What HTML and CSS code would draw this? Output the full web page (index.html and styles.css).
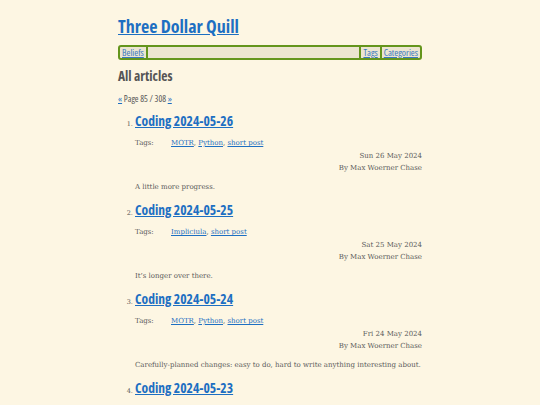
FILE: index.html
```html
<!DOCTYPE html>
<html lang="en">
<head>
<meta charset="utf-8">
<title>All articles - Three Dollar Quill</title>
<link rel="stylesheet" href="styles.css">
</head>
<body>
<div class="page">
  <h1 class="site-title"><a href="#">Three Dollar Quill</a></h1>
  <nav class="nav">
    <a class="nav-link first" href="#">Beliefs</a>
    <span class="nav-fill"></span>
    <a class="nav-link sep" href="#">Tags</a>
    <a class="nav-link sep" href="#">Categories</a>
  </nav>
  <h2 class="section-title">All articles</h2>
  <p class="pager"><a href="#">«</a> Page 85 / 308 <a href="#">»</a></p>
  <ol class="articles">
    <li class="article">
      <h3 class="article-title"><a href="#">Coding 2024-05-26</a></h3>
      <div class="tags"><span class="tags-label">Tags:</span><span><a href="#">MOTR</a>, <a href="#">Python</a>, <a href="#">short post</a></span></div>
      <div class="meta">Sun 26 May 2024</div>
      <div class="meta">By Max Woerner Chase</div>
      <p class="summary">A little more progress.</p>
    </li>
    <li class="article">
      <h3 class="article-title"><a href="#">Coding 2024-05-25</a></h3>
      <div class="tags"><span class="tags-label">Tags:</span><span><a href="#">Impliciula</a>, <a href="#">short post</a></span></div>
      <div class="meta">Sat 25 May 2024</div>
      <div class="meta">By Max Woerner Chase</div>
      <p class="summary">It’s longer over there.</p>
    </li>
    <li class="article">
      <h3 class="article-title"><a href="#">Coding 2024-05-24</a></h3>
      <div class="tags"><span class="tags-label">Tags:</span><span><a href="#">MOTR</a>, <a href="#">Python</a>, <a href="#">short post</a></span></div>
      <div class="meta">Fri 24 May 2024</div>
      <div class="meta">By Max Woerner Chase</div>
      <p class="summary">Carefully-planned changes: easy to do, hard to write anything interesting about.</p>
    </li>
    <li class="article">
      <h3 class="article-title"><a href="#">Coding 2024-05-23</a></h3>
    </li>
  </ol>
</div>
</body>
</html>
```
FILE: styles.css
```css
html, body {
  margin: 0;
  padding: 0;
  background: #fdf6e3;
}
body {
  font-family: "DejaVu Serif", serif;
  color: #5a5a5a;
}
a {
  color: #1d6fc2;
}
.page {
  width: 304px;
  margin: 0 auto;
  padding-top: 15px;
}
.site-title,
.nav,
.section-title,
.pager,
.article-title {
  font-family: "Open Sans", sans-serif;
  font-stretch: 75%;
}
.site-title {
  margin: 0;
  font-size: 18px;
  line-height: 22px;
  font-weight: 700;
}
.nav {
  margin-top: 8px;
  display: flex;
  height: 11px;
  border: 2px solid #64951c;
  border-radius: 3px;
  background: #ece5d0;
  font-size: 9.5px;
  line-height: 11px;
}
.nav-link {
  padding: 0 2px;
  color: #3a78c0;
}
.nav-link.first {
  border-right: 2px solid #64951c;
  padding-left: 2px;
}
.nav-link.sep {
  border-left: 2px solid #64951c;
}
.nav-fill {
  flex: 1;
}
.section-title {
  margin: 8px 0 0;
  font-size: 13.5px;
  line-height: 16px;
  font-weight: 700;
  color: #555;
}
.pager {
  margin: 10px 0 0;
  font-size: 9px;
  line-height: 10px;
  color: #555;
}
.articles {
  margin: 9px 0 0;
  padding-left: 17px;
}
.article::marker {
  font-family: "DejaVu Serif", serif;
  font-size: 6.5px;
  color: #555;
}
.article + .article {
  margin-top: 9px;
}
.article-title {
  margin: 0;
  font-size: 13.6px;
  line-height: 16px;
  font-weight: 700;
}
.tags {
  margin-top: 9px;
  display: flex;
  font-size: 7px;
  line-height: 10px;
}
.tags-label {
  width: 36px;
}
.meta {
  text-align: right;
  font-size: 7px;
  line-height: 12px;
}
.tags + .meta {
  margin-top: 2px;
}
.summary {
  margin: 7px 0 0;
  font-size: 7px;
  line-height: 12px;
}
```
